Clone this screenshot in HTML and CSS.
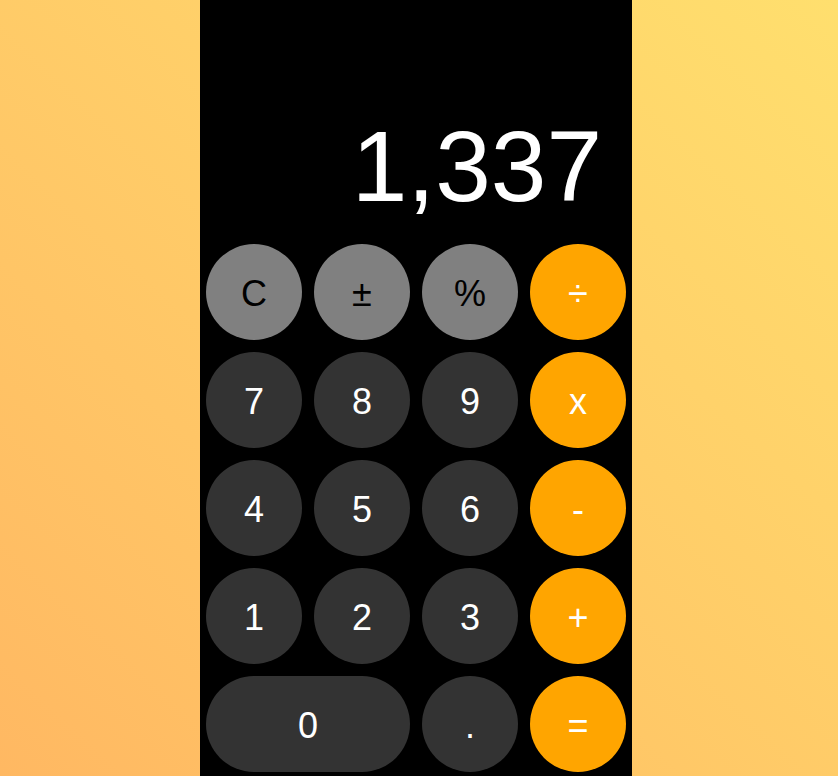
FILE: index.html
```html
<!DOCTYPE html>
<html lang="en">
<head>
<meta charset="utf-8">
<title>Calculator</title>
<link rel="stylesheet" href="styles.css">
</head>
<body>
<main class="calc">
  <div class="display">1,337</div>
  <div class="keys">
    <button class="key fn">C</button>
    <button class="key fn">±</button>
    <button class="key fn">%</button>
    <button class="key op">÷</button>
    <button class="key num">7</button>
    <button class="key num">8</button>
    <button class="key num">9</button>
    <button class="key op">x</button>
    <button class="key num">4</button>
    <button class="key num">5</button>
    <button class="key num">6</button>
    <button class="key op">-</button>
    <button class="key num">1</button>
    <button class="key num">2</button>
    <button class="key num">3</button>
    <button class="key op">+</button>
    <button class="key num wide">0</button>
    <button class="key num">.</button>
    <button class="key op">=</button>
  </div>
</main>
</body>
</html>
```
FILE: styles.css
```css
html, body {
  margin: 0;
  height: 100%;
}
body {
  background: linear-gradient(to top right, #ffb862, #ffdf6e);
  font-family: "Liberation Sans", Arial, sans-serif;
  display: flex;
  justify-content: center;
  align-items: flex-start;
  padding-right: 6px;
  box-sizing: border-box;
  overflow: hidden;
}
.calc {
  width: 432px;
  min-height: 776px;
  background: #000;
  display: flex;
  flex-direction: column;
}
.display {
  flex-shrink: 0;
  height: 240px;
  box-sizing: border-box;
  display: flex;
  align-items: flex-end;
  justify-content: flex-end;
  padding: 0 30px 16px;
  color: #fff;
  font-size: 100px;
  line-height: 115px;
}
.keys {
  flex-shrink: 0;
  display: grid;
  grid-template-columns: repeat(4, 96px);
  grid-auto-rows: 96px;
  gap: 12px;
  padding: 4px 6px 6px;
}
.key {
  border: none;
  margin: 0;
  padding: 4px 0 0;
  border-radius: 48px;
  font-family: "Liberation Sans", Arial, sans-serif;
  font-size: 36px;
  display: flex;
  align-items: center;
  justify-content: center;
}
.fn {
  background: #808080;
  color: #000;
}
.num {
  background: #333333;
  color: #fff;
}
.op {
  background: #ffa500;
  color: #fff;
}
.wide {
  grid-column: span 2;
}
```
